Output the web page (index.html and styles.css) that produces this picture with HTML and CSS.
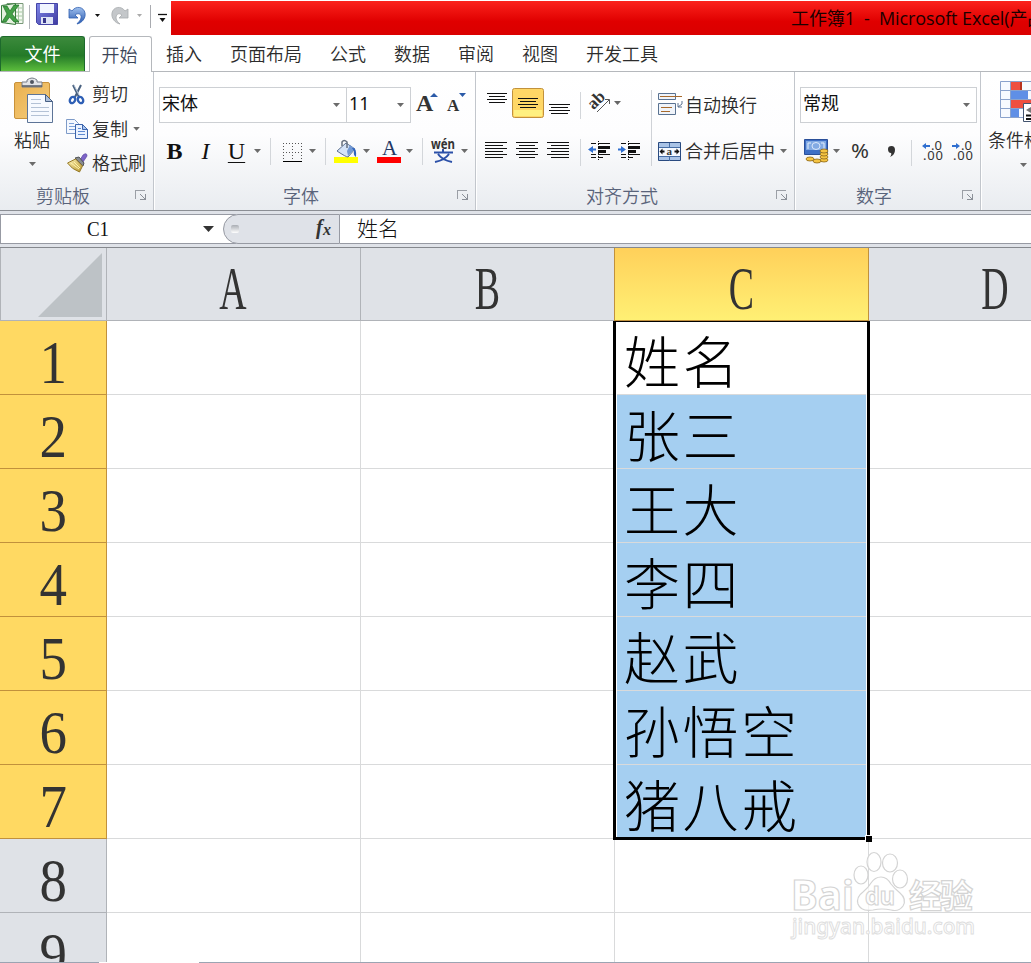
FILE: index.html
```
<!DOCTYPE html>
<html lang="zh-CN">
<head>
    <meta charset="UTF-8">
    <meta name="viewport" content="width=device-width, initial-scale=1.0">
    <title>工作簿1 - Microsoft Excel</title>
    <link rel="stylesheet" href="styles.css">
</head>
<body>
<div class="window">
    <!-- quick access + title -->
    <header class="titlebar">
        <svg class="quick" width="171" height="36" viewBox="0 0 171 36">
            <defs>
                <linearGradient id="blue" x1="0" y1="0" x2="0" y2="1"><stop offset="0" stop-color="#9fc0ee"/><stop offset="1" stop-color="#2858ae"/></linearGradient>
                <linearGradient id="violet" x1="0" y1="0" x2="1" y2="1"><stop offset="0" stop-color="#7f87e8"/><stop offset="1" stop-color="#3e3aa0"/></linearGradient>
                <linearGradient id="gold" x1="0" y1="0" x2="1" y2="1"><stop offset="0" stop-color="#fff3b8"/><stop offset="1" stop-color="#b8962c"/></linearGradient>
                <linearGradient id="tan" x1="0" y1="0" x2="1" y2="1"><stop offset="0" stop-color="#e9b04f"/><stop offset="1" stop-color="#f6cd7c"/></linearGradient>
            </defs>
            <path d="M7 3.500h16v20H7z" fill="#f4faf2" stroke="#789878"/>
            <path d="M15 8h7M15 12h7M15 16h7M15 20h7M18.500 5v18" stroke="#a4c7a0"/>
            <path d="M1.500 5.500l14-2v21l-14-2z" fill="#e5f2df" stroke="#3b7d41"/>
            <path d="M3 6h4l3 5 4-6h5l-7 9 7 8h-5l-4.500-5L6 22H2l5-8z" fill="#43a047" stroke="#23702a" stroke-width=".7"/>
            <path d="M29.500 5v24" stroke="#b2b5ba"/>
            <path d="M36.500 3.500h21v21h-19l-2-2z" fill="url(#violet)" stroke="#4545a6"/>
            <path d="M40 4h14v9H40z" fill="#f1f5ff"/><path d="M41 17h12v7H41z" fill="#dfe5f6"/><path d="M43 18h3v5h-3z" fill="#38378c"/>
            <path d="M69 9v9h9l-3-3c4-3 7 0 6 3-.5 3-3 4-4 6 5-1 9-6 8-11-1-6-9-8-13-2z" fill="url(#blue)" stroke="#2f5eb0" stroke-width=".8"/>
            <path d="M95 14h5l-2.500 3z" fill="#111"/>
            <path d="M128 9v9h-9l3-3c-4-3-6 0-6 3 .5 3 2 4 4 6-5-1-9-6-8-11 1-6 9-8 13-2z" fill="#c4c7ca" stroke="#a7abad" stroke-width=".8"/>
            <path d="M137 14h5l-2.500 3z" fill="#aaa"/>
            <path d="M150.500 5v23" stroke="#a9abb0"/>
            <path d="M158 14.500h9" stroke="#111" stroke-width="1.300"/><path d="M159.500 18h6l-3 4z" fill="#111"/>
        </svg>
        <div class="title">工作簿1&nbsp; - &nbsp;Microsoft Excel(产品激活失败)</div>
    </header>

    <nav class="tabs">
        <a class="file">文件</a>
        <a class="current">开始</a>
        <a>插入</a><a>页面布局</a><a>公式</a><a>数据</a><a>审阅</a><a>视图</a><a>开发工具</a>
    </nav>

    <section class="ribbon">
        <div class="group clipboard">
            <div class="body">
                <div class="big">
                    <svg width="46" height="48" viewBox="11 76 46 48">
                        <rect x="14.500" y="82.500" width="35" height="36" rx="1.500" fill="url(#tan)" stroke="#c8923b"/>
                        <path d="M22 87v-5h5v-2q5-4 10 0v2h5v5z" fill="#e2e4e8" stroke="#777d88"/>
                        <path d="M22 86h20" stroke="#555b66" stroke-width="1.500"/><circle cx="32" cy="82" r="2" fill="#4f5560"/>
                        <path d="M27.500 94.500h18l7 7v21h-25z" fill="#f7faff" stroke="#5d7497"/>
                        <path d="M45.500 94.500v7h7z" fill="#aebfd8" stroke="#465f84"/>
                        <path d="M31 99.500h10M31 103.500h10M31 107.500h18M31 111.500h18M31 115.500h18" stroke="#b4c2d6"/>
                    </svg>
                    <span>粘贴</span>
                    <i class="caret"></i>
                </div>
                <div class="list">
                    <div class="cmd">
                        <svg width="26" height="24" viewBox="66 82 26 24">
                            <path d="M73 85l6 12M81 85l-6 12" stroke="#48607f" stroke-width="2"/>
                            <path d="M74 85l5 10" stroke="#b9c8da"/>
                            <ellipse cx="72.500" cy="100" rx="2.500" ry="3.300" fill="none" stroke="#2e5fb5" stroke-width="2.400" transform="rotate(30 72.500 100)"/>
                            <ellipse cx="80.500" cy="100" rx="2.500" ry="3.300" fill="none" stroke="#2e5fb5" stroke-width="2.400" transform="rotate(-30 80.500 100)"/>
                        </svg>
                        <span>剪切</span>
                    </div>
                    <div class="cmd">
                        <svg width="26" height="24" viewBox="66 117 26 24">
                            <path d="M66.500 119.500h8l4 4v10h-12z" fill="#f4f8ff" stroke="#7e9bc8"/>
                            <path d="M69 123.500h5M69 126.500h6M69 129.500h6" stroke="#7ea2da"/>
                            <path d="M75.500 124.500h7l5 5v9h-12z" fill="#eaf2ff" stroke="#3c65ad"/>
                            <path d="M82.500 124.500v5h5z" fill="#a9c4ee" stroke="#3c65ad"/>
                            <path d="M78 128.500h3M78 131.500h7M78 134.500h7" stroke="#5e8ad2"/>
                        </svg>
                        <span>复制</span><i class="caret"></i>
                    </div>
                    <div class="cmd">
                        <svg width="26" height="24" viewBox="66 151 26 24">
                            <path d="M80 160l3-5q4-3 4 1l-4 6z" fill="#7d63c8" stroke="#5945a0" stroke-width=".7"/>
                            <path d="M75 158l4-1 5 6-1 3z" fill="#888c91" stroke="#4f5256"/>
                            <path d="M67.500 163l8-4 7 7-3 6q-8-3-12-9z" fill="url(#gold)" stroke="#967a29"/>
                            <path d="M71 163l8 6M74 162l6 6" stroke="#fff2a8" stroke-width="1"/>
                        </svg>
                        <span>格式刷</span>
                    </div>
                </div>
            </div>
            <div class="label"><span>剪贴板</span><i class="launcher"></i></div>
        </div>

        <div class="group font">
            <div class="row">
                <div class="combo face"><span>宋体</span><i class="caret"></i></div>
                <div class="combo size"><span>11</span><i class="caret"></i></div>
                <svg width="58" height="36" viewBox="411 87 58 36">
                    <text class="serif-b" x="416" y="111" font-size="24">A</text><path d="M430 97l4-4 4 4z" fill="#2b5aa8"/>
                    <text class="serif-b" x="447" y="111" font-size="17">A</text><path d="M459 93h7l-3.500 4z" fill="#2b5aa8"/>
                </svg>
            </div>
            <div class="row second">
                <span class="letter"><b>B</b></span><span class="letter"><em>I</em></span><span class="letter"><u>U</u></span>
                <i class="caret"></i><i class="sep"></i>
                <svg width="29" height="36" viewBox="278 133 29 36">
                    <path d="M283.500 143v18M292.500 143v18M301.500 143v18M283 143.500h19M283 152.500h19" stroke="#555" stroke-dasharray="1 2"/>
                    <path d="M283 161.500h19" stroke="#000"/>
                </svg>
                <i class="caret"></i><i class="sep"></i>
                <svg width="28" height="36" viewBox="333 133 28 36">
                    <path d="M334 157h24v6h-24z" fill="#ff0"/>
                    <path d="M337 151l9-8 9 6-7 8q-2 0-11-6z" fill="#d4e3f8" stroke="#5d7191"/>
                    <path d="M348 156l7-7-5-4-3 6z" fill="#7299d3"/>
                    <path d="M342 146v-4q2-3 5 0v6" fill="none" stroke="#66707f" stroke-width="1.500"/>
                    <path d="M352 148q5-1 4 9-3-2-2-6z" fill="#2f63bd"/>
                </svg>
                <i class="caret"></i>
                <svg width="32" height="36" viewBox="372 133 32 36">
                    <path d="M377 157h24v6h-24z" fill="#f00"/>
                    <text class="serif" x="382" y="155" font-size="21">A</text>
                </svg>
                <i class="caret"></i><i class="sep"></i>
                <svg width="29" height="36" viewBox="430 133 29 36">
                    <text class="pinyin" x="431" y="149" textLength="24" lengthAdjust="spacingAndGlyphs">wén</text>
                    <path d="M443 149v3M434 152.500h19M438 154q4 6 14 8M449 154q-4 6-14 8" fill="none" stroke="#2b50a8" stroke-width="2"/>
                </svg>
                <i class="caret"></i>
            </div>
            <div class="label"><span>字体</span><i class="launcher"></i></div>
        </div>

        <div class="group align">
            <div class="body">
                <div class="icons">
                    <svg width="174" height="36" viewBox="477 87 174 36">
                        <path d="M487 93.500h20M489 96.500h16M487 99.500h20M489 102.500h16" stroke="#111"/>
                        <rect x="512.500" y="88.500" width="31" height="29" rx="2" fill="#ffd766" stroke="#c1913c"/>
                        <path d="M514 110h28v6h-28z" fill="#fff080"/>
                        <path d="M518 98.500h20M520 101.500h16M518 104.500h20M520 107.500h16" stroke="#111"/>
                        <path d="M549 104.500h21M551 107.500h17M549 110.500h21M551 113.500h17" stroke="#111"/>
                        <path d="M580.500 92v27" stroke="#d3d6da"/>
                        <text class="serif-b" x="591" y="108" font-size="17" transform="rotate(-45 595 106)">ab</text>
                        <path d="M597 112l12-12M605 99.500h4.500v4.500" stroke="#555" fill="none"/>
                        <path d="M614 101h7l-3.500 4z" fill="#666"/>
                    </svg>
                    <svg width="174" height="36" viewBox="477 133 174 36">
                        <path d="M485 142.500h22M485 145.500h18M485 148.500h22M485 151.500h18M485 154.500h22M485 157.500h18M516 142.500h22M519 145.500h16M516 148.500h22M519 151.500h16M516 154.500h22M519 157.500h16M547 142.500h22M551 145.500h18M547 148.500h22M551 151.500h18M547 154.500h22M551 157.500h18" stroke="#111"/>
                        <path d="M580.500 139v27" stroke="#d3d6da"/>
                        <path d="M591 143.500h5M598 143.500h12M591 154.500h5M598 154.500h12M591 157.500h5M598 157.500h5M621 143.500h5M628 143.500h12M621 154.500h5M628 154.500h12M621 157.500h5M628 157.500h5" stroke="#111"/>
                        <path d="M598 147.500h12M628 147.500h12M598 151.500h8M628 151.500h8" stroke="#111" stroke-width="3"/>
                        <path d="M598.500 141v20M628.500 141v20" stroke="#111" stroke-dasharray="1 2"/>
                        <path d="M588 149.500l5-3.500v2.500h3v2h-3v2.500zM626 149.500l-5-3.500v2.500h-3v2h3v2.500z" fill="#2f6fd0"/>
                    </svg>
                </div>
                <i class="tall"></i>
                <div class="wide">
                    <div class="cmd">
                        <svg width="28" height="36" viewBox="657 87 28 36">
                            <path d="M658.500 93.500h17v6h-17zM658.500 103.500h17v11h-17z" fill="#f0f4fa" stroke="#5a7291"/>
                            <path d="M660 96.500h22M661 107.500h11M661 111.500h9" stroke="#a86a2c" stroke-width="1.200"/>
                            <path d="M682 101v3l-4 3M678 103v4h4" stroke="#5a7291" fill="none"/>
                        </svg>
                        <span>自动换行</span>
                    </div>
                    <div class="cmd">
                        <svg width="28" height="36" viewBox="657 133 28 36">
                            <path d="M658.500 142.500h22v18h-22z" fill="#a9c3e6" stroke="#294a80"/>
                            <path d="M659 147.500h21M659 156.500h21M669.500 143v4M669.500 157v4" stroke="#456da5"/>
                            <path d="M659 148h21v8h-21z" fill="#f5f9ff"/>
                            <text x="666.500" y="155" font-size="11" class="serif-b">a</text>
                            <path d="M659.500 151.500l3-3v2h2v2h-2v2zM679.500 151.500l-3-3v2h-2v2h2v2z" fill="#111"/>
                        </svg>
                        <span>合并后居中</span><i class="caret"></i>
                    </div>
                </div>
            </div>
            <div class="label"><span>对齐方式</span><i class="launcher"></i></div>
        </div>

        <div class="group number">
            <div class="row">
                <div class="combo format"><span>常规</span><i class="caret"></i></div>
            </div>
            <div class="row second">
                <svg width="31" height="36" viewBox="800 133 31 36">
                    <path d="M804.500 139.500h23v15h-23z" fill="#3e6fc5" stroke="#2a4f99"/>
                    <path d="M806 141h20v9h-20z" fill="#82aae3"/><ellipse cx="816" cy="146" rx="4" ry="3.500" fill="none" stroke="#dce9fb"/>
                    <path d="M808 149v-6h3M824 149v-6h-3" stroke="#e2edfb" fill="none"/>
                    <g fill="#f5c443" stroke="#8a6417" stroke-width=".8"><ellipse cx="824" cy="160" rx="4" ry="2"/><ellipse cx="824" cy="157" rx="4" ry="2"/><ellipse cx="824" cy="154" rx="4" ry="2"/><ellipse cx="824" cy="151" rx="4" ry="2"/><ellipse cx="810" cy="159" rx="4" ry="2"/><ellipse cx="817" cy="161" rx="4" ry="2"/></g>
                </svg>
                <i class="caret"></i>
                <svg width="135" height="36" viewBox="842 133 135 36">
                    <text class="sans" x="851" y="158" font-size="19" textLength="18" lengthAdjust="spacingAndGlyphs">%</text>
                    <path d="M888 149q0-3 3.500-3t3.500 4q0 5-5 7q2-3 1-4-3 0-3-4z" fill="#333"/>
                    <path d="M911.500 140v26" stroke="#d3d6da"/>
                    <text class="sans" x="931" y="150" font-size="13">.0</text><text class="sans" x="923" y="160" font-size="13" textLength="20">.00</text>
                    <text class="sans" x="961" y="150" font-size="13">.0</text><text class="sans" x="953" y="160" font-size="13" textLength="20">.00</text>
                    <path d="M922 146l4-3v2h4v2h-4v2zM960 146l-4-3v2h-4v2h4v2z" fill="#2f6fd0"/>
                </svg>
            </div>
            <div class="label"><span>数字</span><i class="launcher"></i></div>
        </div>

        <div class="group styles">
            <svg width="49" height="48" viewBox="982 76 49 48">
                <path d="M1000.500 81.500h40v36h-40z" fill="#f7faff" stroke="#8aa2cc"/>
                <path d="M1001 90.500h30M1001 99.500h30M1001 108.500h30M1010.500 82v36" stroke="#8aa2cc"/>
                <path d="M1011 82h10v8h-10zM1011 100h20v8h-20z" fill="#ee5040"/><path d="M1011 91h17v8h-17zM1011 109h8v8h-8z" fill="#5f8fe6"/>
                <path d="M1020 82h2v8h-2z" fill="#b8321f"/>
                <path d="M1023.500 103.500h14v18h-14z" fill="#fff" stroke="#42536e"/><path d="M1026 115.500h6M1026 119h6" stroke="#111" stroke-width="2"/><path d="M1026 110l5-3v6z" fill="#777"/>
            </svg>
            <span>条件格式</span>
            <i class="caret"></i>
        </div>
    </section>

    <section class="formula">
        <div class="name"><span>C1</span><i></i></div>
        <div class="fx"><i></i><svg width="22" height="24" viewBox="0 0 22 24"><text class="fx-text" x="4" y="17" font-size="20">f</text><text class="fx-text" x="11" y="18" font-size="16">x</text></svg></div>
        <div class="input">姓名</div>
    </section>

    <main class="sheet">
        <div class="corner"><svg width="64" height="64" viewBox="0 0 64 64"><path d="M64 0v64H0z" fill="#bdc2c6"/></svg></div>
        <div class="col"><span>A</span></div><div class="col"><span>B</span></div><div class="col on"><span>C</span></div><div class="col"><span>D</span></div>
        <div class="num on"><span>1</span></div><div class="cell"></div><div class="cell"></div><div class="cell">姓名</div><div class="cell"></div>
        <div class="num on"><span>2</span></div><div class="cell"></div><div class="cell"></div><div class="cell picked">张三</div><div class="cell"></div>
        <div class="num on"><span>3</span></div><div class="cell"></div><div class="cell"></div><div class="cell picked">王大</div><div class="cell"></div>
        <div class="num on"><span>4</span></div><div class="cell"></div><div class="cell"></div><div class="cell picked">李四</div><div class="cell"></div>
        <div class="num on"><span>5</span></div><div class="cell"></div><div class="cell"></div><div class="cell picked">赵武</div><div class="cell"></div>
        <div class="num on"><span>6</span></div><div class="cell"></div><div class="cell"></div><div class="cell picked">孙悟空</div><div class="cell"></div>
        <div class="num on"><span>7</span></div><div class="cell"></div><div class="cell"></div><div class="cell picked">猪八戒</div><div class="cell"></div>
        <div class="num"><span>8</span></div><div class="cell"></div><div class="cell"></div><div class="cell"></div><div class="cell"></div>
        <div class="num"><span>9</span></div><div class="cell"></div><div class="cell"></div><div class="cell"></div><div class="cell"></div>
        <!-- selection frame with its fill handle -->
        <div class="selection"><i></i></div>
        <svg class="watermark" width="200" height="100" viewBox="785 845 200 100">
            <g fill="#fff" fill-opacity=".7" stroke="#d4d4d4" stroke-width="1.200">
                <ellipse cx="861" cy="875" rx="7" ry="9"/><ellipse cx="874" cy="862" rx="7" ry="9.500"/><ellipse cx="890" cy="863" rx="7.500" ry="9"/><ellipse cx="900" cy="879" rx="7.500" ry="9"/>
                <path d="M881 877q6 0 10 7 4 5 9 9 7 6 3 13-4 6-12 4-9-2-18 0-12 2-15-6-2-7 5-12 5-4 8-9 4-6 10-6z"/>
                <text x="791" y="910" font-size="42" font-weight="bold" textLength="63" lengthAdjust="spacingAndGlyphs">Bai</text>
                <text x="865" y="905" font-size="25" font-weight="bold" textLength="30" lengthAdjust="spacingAndGlyphs">du</text>
                <text x="909" y="908" font-size="33" font-weight="bold" textLength="64">经验</text>
            </g>
            <text x="792" y="934" font-size="22" font-weight="500" fill="#fff" stroke="#dedede" textLength="183" lengthAdjust="spacingAndGlyphs">jingyan.baidu.com</text>
        </svg>
    </main>
    <footer class="edge"><i></i><i></i></footer>
</div>
</body>
</html>
```
FILE: styles.css
```
*{
    box-sizing: border-box;
    margin: 0;
    padding: 0;
}
body{
    background: #fff;
    color: #2c2c2c;
    font-family: "Noto Sans", "Noto Sans CJK SC", sans-serif;
    font-size: 18px;
    overflow: hidden;
}
svg{
    display: block;
    flex: none;
}
i{
    display: block;
    flex: none;
}
.window{
    width: 1031px;
    height: 963px;
    overflow: hidden;
    display: flex;
    flex-direction: column;
}
/* title bar */
.titlebar{
    display: flex;
    height: 36px;
    flex: none;
}
.title{
    flex: 1;
    height: 34px;
    margin-top: 1px;
    padding-left: 620px;
    background: linear-gradient(#fb231d, #e00000 60%, #da0000);
    color: #1c0000;
    font-family: "Open Sans", "Noto Sans CJK SC", sans-serif;
    font-size: 18px;
    letter-spacing: -.1px;
    line-height: 34px;
    white-space: nowrap;
    overflow: hidden;
}
/* tabs */
.tabs{
    display: flex;
    flex: none;
    height: 36px;
    line-height: 36px;
    border-bottom: 1px solid #b5b8bc;
    font-weight: 350;
    white-space: nowrap;
}
.tabs a{
    margin-left: 28px;
}
.tabs .file{
    width: 85px;
    height: 35px;
    margin: 0;
    text-align: center;
    line-height: 34px;
    color: #fff;
    font-weight: 400;
    border: 1px solid #1d6a2c;
    border-bottom: 0;
    border-radius: 3px 3px 0 0;
    background: linear-gradient(#3c8a3c, #247a28 55%, #5cbd3c);
}
.tabs .current{
    width: 63px;
    height: 36px;
    margin: 0 -14px 0 4px;
    padding-right: 2px;
    text-align: center;
    color: #3c4658;
    background: #fff;
    border: 1px solid #b5b8bc;
    border-bottom: 0;
    border-radius: 3px 3px 0 0;
}
/* ribbon */
.ribbon{
    display: flex;
    flex: none;
    height: 139px;
    background: linear-gradient(#fff, #fdfdfe 45%, #e9ecf0);
    border-bottom: 1px solid #8b8e94;
    overflow: hidden;
    font-weight: 350;
    white-space: nowrap;
}
.group{
    display: flex;
    flex-direction: column;
    flex: none;
    height: 138px;
    border-right: 1px solid #c2c6cc;
    box-shadow: 1px 0 #fff;
}
.clipboard{ width: 154px; }
.font{ width: 322px; }
.align{ width: 319px; padding-left: 1px; }
.number{ width: 186px; }
.styles{
    width: 90px;
    border: 0;
    padding: 4px 0 0 1px;
}
.styles span{
    margin-left: 6px;
    line-height: 32px;
}
.styles .caret{ margin: 7px 0 0 38px; }
.body{
    display: flex;
    height: 112px;
}
.label{
    display: flex;
    justify-content: center;
    position: relative;
    height: 26px;
    margin-top: auto;
    padding-right: 27px;
    line-height: 25px;
    color: #59637a;
}
.label .launcher{
    position: absolute;
    right: 8px;
    top: 6px;
    width: 10px;
    height: 9px;
    border-top: 1px solid #9b9fa6;
    border-left: 1px solid #9b9fa6;
}
.launcher::after{
    content: "";
    display: block;
    width: 5px;
    height: 5px;
    margin: 3px 0 0 4px;
    border-right: 1px solid #8b9098;
    border-bottom: 1px solid #8b9098;
    background: linear-gradient(to bottom left, transparent 40%, #8b9098 42%, #8b9098 56%, transparent 58%);
}
.caret{
    width: 7px;
    height: 4px;
    margin: 0 2px;
    background: #6b6b6b;
    clip-path: polygon(0 0, 100% 0, 50% 100%);
}
.sep{
    width: 1px;
    height: 27px;
    margin: 0 7px;
    background: #d3d6da;
}
.big{
    width: 66px;
    padding: 4px 0 0 11px;
}
.big span{
    display: block;
    margin-left: 3px;
    line-height: 32px;
}
.big .caret{ margin: 6px 0 0 18px; }
.list{ padding-top: 5px; }
.cmd{
    display: flex;
    align-items: center;
}
.list .cmd{ height: 34.500px; }
.list span{ line-height: 34px; }
.list .caret{ margin-left: 5px; }
.row{
    display: flex;
    align-items: center;
    height: 36px;
    margin-top: 15px;
    padding-left: 5px;
}
.row.second{ margin-top: 10px; }
.combo{
    display: flex;
    align-items: center;
    justify-content: space-between;
    height: 36px;
    background: #fff;
    border: 1px solid #cdd0d4;
    padding: 0 4px 0 2px;
    color: #111;
    font-weight: 400;
}
.combo span{ line-height: 30px; margin-top: -4px; }
.face{ width: 188px; }
.size{
    width: 65px;
    margin-left: -1px;
}
.format{ width: 177px; }
.letter{
    width: 31px;
    text-align: center;
    font-family: "Liberation Serif", serif;
    font-size: 24px;
    line-height: 30px;
    color: #111;
}
.letter b{ font-weight: bold; }
.letter u{
    text-decoration-thickness: 1px;
    text-underline-offset: 3px;
}
.icons{
    width: 174px;
    padding-top: 15px;
}
.icons svg + svg, .wide .cmd + .cmd{ margin-top: 10px; }
.tall{
    width: 1px;
    height: 76px;
    margin: 18px 5px 0 0;
    background: #cfd2d7;
}
.wide{ padding-top: 15px; }
.wide span{ margin-top: -2px; }
.wide .caret{ margin-left: 5px; }
.serif-b{
    font-family: "Liberation Serif", serif;
    font-weight: bold;
    fill: #333;
}
.serif{
    font-family: "Liberation Serif", serif;
    fill: #1f3864;
}
.sans{
    font-family: "Noto Sans", sans-serif;
    font-weight: 400;
    fill: #333;
}
.pinyin{
    font-family: "Noto Sans", sans-serif;
    font-size: 14px;
    font-weight: bold;
    fill: #333;
}
/* formula bar */
.formula{
    display: flex;
    flex: none;
    height: 37px;
    padding: 3px 0;
    background: #dfe2e8;
    border-bottom: 1px solid #85888d;
    font-family: "Liberation Serif", "Noto Sans CJK SC", serif;
    font-weight: 300;
    color: #111;
}
.name, .fx, .input{
    height: 30px;
    border-top: 1px solid #979aa3;
    border-bottom: 1px solid #979aa3;
    background: #fff;
}
.name{
    display: flex;
    align-items: center;
    width: 236px;
    padding-left: 86px;
    border-left: 1px solid #979aa3;
    font-size: 22px;
    line-height: 30px;
}
.name span{
    width: 116px;
    transform: scaleX(.86);
    transform-origin: left;
}
.name i{
    width: 11px;
    height: 6px;
    background: #333;
    clip-path: polygon(0 0, 100% 0, 50% 100%);
}
.fx{
    display: flex;
    align-items: center;
    justify-content: space-between;
    width: 117px;
    margin-left: -13px;
    padding: 0 5px 0 7px;
    background: #dfe2e8;
    border: 1px solid #979aa3;
    border-radius: 15px 0 0 15px;
}
.fx i{
    width: 8px;
    height: 8px;
    border-radius: 2px;
    background: linear-gradient(#a9adb3, #fff);
}
.fx-text{
    font-family: "Liberation Serif", serif;
    font-style: italic;
    font-weight: bold;
    fill: #333;
}
.input{
    flex: 1;
    padding-left: 17px;
    font-size: 21px;
    line-height: 29px;
}
/* sheet */
.sheet{
    position: relative;
    display: grid;
    grid-template-columns: 107px 254px 254px 254px 254px;
    grid-template-rows: 73px;
    grid-auto-rows: 74px;
    height: 714px;
    flex: none;
    overflow: hidden;
}
.corner, .col, .num{
    background: #dfe2e7;
    border-right: 1px solid #b0b3b8;
    border-bottom: 1px solid #b0b3b8;
}
.corner{
    padding: 5px 0 0 37px;
    border-left: 1px solid #b0b3b8;
}
.col, .num{
    display: flex;
    justify-content: center;
    align-items: center;
    font-family: "Liberation Serif", serif;
    font-size: 61px;
    line-height: 70px;
    color: #333;
}
.col span{
    transform: translateY(5px) scaleX(.62);
}
.num span{
    transform: translateY(5px) scaleX(.9);
}
.col.on{
    background: linear-gradient(#ffd05a, #fff074);
    border-color: #c1913c;
    box-shadow: -1px 0 #c1913c;
}
.num.on{
    background: #ffd962;
    border-color: #c1913c;
}
.cell{
    padding-left: 9px;
    border-right: 1px solid #d9dadb;
    border-bottom: 1px solid #d9dadb;
    font-family: "Noto Sans CJK SC", sans-serif;
    font-size: 56px;
    font-weight: 300;
    letter-spacing: 2.500px;
    line-height: 76px;
    color: #000;
    overflow: hidden;
    white-space: nowrap;
}
.picked{ background: #a5cff1; }
.selection{
    position: absolute;
    left: 613px;
    top: 73px;
    width: 257px;
    height: 519px;
    border: 3px solid #000;
    border-top-width: 1px;
    box-shadow: inset 1px 0 #fff, inset -1px 0 #fff;
}
.selection i{
    position: absolute;
    right: -5px;
    bottom: -5px;
    width: 7px;
    height: 7px;
    background: #000;
    border: solid #fff;
    border-width: 1px 0 0 1px;
}
.watermark{
    position: absolute;
    left: 785px;
    top: 597px;
    font-family: "Noto Sans", "Noto Sans CJK SC", sans-serif;
}
.edge{
    display: flex;
    justify-content: space-between;
    flex: none;
    height: 1px;
}
.edge i{
    width: 99px;
    background: #9ba4b2;
}
.edge i + i{ width: 832px; }
```
